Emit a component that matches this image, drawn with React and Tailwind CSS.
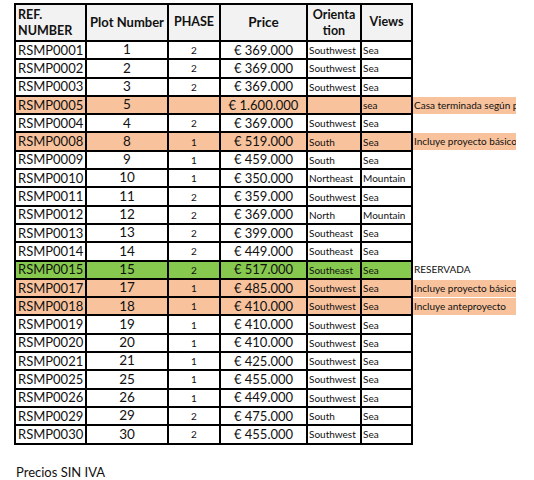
import React from 'react';

const rows = [
    { ref: 'RSMP0001', plot: '1', phase: '2', price: '€ 369.000', ori: 'Southwest', views: 'Sea' },
    { ref: 'RSMP0002', plot: '2', phase: '2', price: '€ 369.000', ori: 'Southwest', views: 'Sea' },
    { ref: 'RSMP0003', plot: '3', phase: '2', price: '€ 369.000', ori: 'Southwest', views: 'Sea' },
    { ref: 'RSMP0005', plot: '5', phase: '', price: '€ 1.600.000', ori: '', views: 'sea', tone: 'orange', note: 'Casa terminada según proyecto' },
    { ref: 'RSMP0004', plot: '4', phase: '2', price: '€ 369.000', ori: 'Southwest', views: 'Sea' },
    { ref: 'RSMP0008', plot: '8', phase: '1', price: '€ 519.000', ori: 'South', views: 'Sea', tone: 'orange', note: 'Incluye proyecto básico' },
    { ref: 'RSMP0009', plot: '9', phase: '1', price: '€ 459.000', ori: 'South', views: 'Sea' },
    { ref: 'RSMP0010', plot: '10', phase: '1', price: '€ 350.000', ori: 'Northeast', views: 'Mountain' },
    { ref: 'RSMP0011', plot: '11', phase: '2', price: '€ 359.000', ori: 'Southwest', views: 'Sea' },
    { ref: 'RSMP0012', plot: '12', phase: '2', price: '€ 369.000', ori: 'North', views: 'Mountain' },
    { ref: 'RSMP0013', plot: '13', phase: '2', price: '€ 399.000', ori: 'Southeast', views: 'Sea' },
    { ref: 'RSMP0014', plot: '14', phase: '2', price: '€ 449.000', ori: 'Southeast', views: 'Sea' },
    { ref: 'RSMP0015', plot: '15', phase: '2', price: '€ 517.000', ori: 'Southeast', views: 'Sea', tone: 'green', note: 'RESERVADA' },
    { ref: 'RSMP0017', plot: '17', phase: '1', price: '€ 485.000', ori: 'Southwest', views: 'Sea', tone: 'orange', note: 'Incluye proyecto básico' },
    { ref: 'RSMP0018', plot: '18', phase: '1', price: '€ 410.000', ori: 'Southwest', views: 'Sea', tone: 'orange', note: 'Incluye anteproyecto' },
    { ref: 'RSMP0019', plot: '19', phase: '1', price: '€ 410.000', ori: 'Southwest', views: 'Sea' },
    { ref: 'RSMP0020', plot: '20', phase: '1', price: '€ 410.000', ori: 'Southwest', views: 'Sea' },
    { ref: 'RSMP0021', plot: '21', phase: '1', price: '€ 425.000', ori: 'Southwest', views: 'Sea' },
    { ref: 'RSMP0025', plot: '25', phase: '1', price: '€ 455.000', ori: 'Southwest', views: 'Sea' },
    { ref: 'RSMP0026', plot: '26', phase: '1', price: '€ 449.000', ori: 'Southwest', views: 'Sea' },
    { ref: 'RSMP0029', plot: '29', phase: '2', price: '€ 475.000', ori: 'South', views: 'Sea' },
    { ref: 'RSMP0030', plot: '30', phase: '2', price: '€ 455.000', ori: 'Southwest', views: 'Sea' },
];

const toneBg = { orange: 'bg-[#f8c29c]', green: 'bg-[#86c94e]' };

const App = () => {
    const cell = 'border-2 border-black p-0 leading-none overflow-hidden whitespace-nowrap';
    return (
        <div className="w-[534px] h-[480px] bg-white text-[#111] pl-[14px] pt-[3px]" style={{ fontFamily: 'Lato, "Open Sans", sans-serif' }}>
            <table className="border-collapse table-fixed w-[501px]">
                <colgroup>
                    <col className="w-[71px]" />
                    <col className="w-[82px]" />
                    <col className="w-[52px]" />
                    <col className="w-[87px]" />
                    <col className="w-[54px]" />
                    <col className="w-[51px]" />
                    <col className="w-[104px]" />
                </colgroup>
                <thead>
                    <tr className="bg-[#f2f2f2] h-[37px]">
                        <th className="border-2 border-black p-0 pl-[2px] text-left text-[12.5px] leading-[16px] font-bold">REF.<br />NUMBER</th>
                        <th className="border-2 border-black p-0 text-[13px] font-bold whitespace-nowrap">Plot Number</th>
                        <th className="border-2 border-black p-0 text-[12.5px] font-bold">PHASE</th>
                        <th className="border-2 border-black p-0 text-[13.5px] font-bold">Price</th>
                        <th className="border-2 border-black p-0 text-[12.5px] leading-[16px] font-bold">Orienta<br />tion</th>
                        <th className="border-2 border-black p-0 text-[12.5px] font-bold">Views</th>
                        <th className="p-0 bg-white"></th>
                    </tr>
                </thead>
                <tbody>
                    {rows.map((r) => {
                        const bg = r.tone ? toneBg[r.tone] : '';
                        return (
                            <tr key={r.ref} className={`${bg} h-[18.3px]`}>
                                <td className={`${cell} pl-[2px] text-[13px]`}>{r.ref}</td>
                                <td className={`${cell} text-center text-[13.5px]`}>{r.plot}</td>
                                <td className={`${cell} text-center text-[10px]`}>{r.phase}</td>
                                <td className={`${cell} text-center text-[13px]`}>{r.price}</td>
                                <td className={`${cell} pl-[1px] text-[10px]`}>{r.ori}</td>
                                <td className={`${cell} pl-[1px] text-[10px]`}>{r.views}</td>
                                <td className="p-0 bg-white">
                                    {r.note && (
                                        <div className={`h-[17px] pl-[1px] flex items-center overflow-hidden whitespace-nowrap text-[10px] ${r.tone === 'orange' ? 'bg-[#f8c29c]' : ''}`}>
                                            {r.note}
                                        </div>
                                    )}
                                </td>
                            </tr>
                        );
                    })}
                </tbody>
            </table>
            <p className="mt-[18px] ml-[2px] text-[13px]">Precios SIN IVA</p>
        </div>
    );
};

export default App;
